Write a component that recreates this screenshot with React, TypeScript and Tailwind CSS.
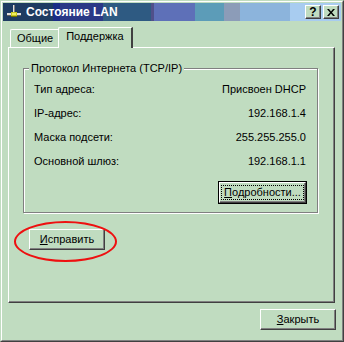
import React from "react";

const face = "bg-[#c0dcc0]";
const font = { fontFamily: '"Liberation Sans", Arial, sans-serif' };

const rows = [
  { label: "Тип адреса:", value: "Присвоен DHCP" },
  { label: "IP-адрес:", value: "192.168.1.4" },
  { label: "Маска подсети:", value: "255.255.255.0" },
  { label: "Основной шлюз:", value: "192.168.1.1" },
];

function LanIcon() {
  return (
    <svg width="16" height="16" viewBox="0 0 16 16" className="shrink-0">
      <rect x="7" y="1" width="2" height="8" fill="#e0e0e0" />
      <rect x="8" y="1" width="1" height="8" fill="#808080" />
      <rect x="1" y="9" width="14" height="2" fill="#e0e0e0" />
      <rect x="1" y="11" width="14" height="1" fill="#606060" />
      <rect x="5" y="8" width="6" height="5" fill="#c8c820" />
      <rect x="5" y="12" width="6" height="1" fill="#707000" />
      <rect x="6" y="9" width="4" height="2" fill="#f0f060" />
    </svg>
  );
}

function Btn({
  children,
  w,
  isDefault,
}: {
  children: React.ReactNode;
  w: string;
  isDefault?: boolean;
}) {
  const inner = (
    <div
      className={`${w} h-[21px] flex items-center justify-center border border-t-white border-l-white border-r-[#404040] border-b-[#404040] shadow-[inset_-1px_-1px_#808080] ${face}`}
    >
      {isDefault ? (
        <span className="border border-dotted border-black px-[2px] leading-[13px]">{children}</span>
      ) : (
        children
      )}
    </div>
  );
  if (isDefault) return <div className="border border-black">{inner}</div>;
  return inner;
}

export default function App() {
  return (
    <div
      className={`w-[344px] h-[342px] ${face} flex flex-col border border-t-[#c0dcc0] border-l-[#c0dcc0] border-r-[#404040] border-b-[#404040] text-[11px] text-black`}
      style={font}
    >
      <div className="flex-1 flex flex-col border border-t-white border-l-white border-r-[#808080] border-b-[#808080] p-px">
        {/* title bar */}
        <div className="h-[18px] flex items-center pl-[3px] pr-[2px] gap-[4px] bg-[linear-gradient(90deg,#1e3c62_0px,#1e3c62_50px,#1a2c86_50px,#1a2c86_57px,#2a3886_57px,#2a3886_100px,#2e5a82_100px,#2e5a82_148px,#50508a_148px,#50508a_151px,#5e70b8_151px,#5e70b8_192px,#5c9cb8_192px,#5c9cb8_221px,#8c9cb8_221px,#8c9cb8_237px,#8cb4dc_237px,#8cb4dc_287px,#a8ccf0_287px,#a8ccf0_100%)]">
          <LanIcon />
          <span className="text-white font-bold text-[12px]">Состояние LAN</span>
          <div className="ml-auto flex gap-[2px]">
            <div className={`w-[16px] h-[14px] flex items-center justify-center font-bold text-[12px] border border-t-white border-l-white border-r-[#404040] border-b-[#404040] shadow-[inset_-1px_-1px_#808080] ${face}`}>
              ?
            </div>
            <div className={`w-[16px] h-[14px] flex items-center justify-center border border-t-white border-l-white border-r-[#404040] border-b-[#404040] shadow-[inset_-1px_-1px_#808080] ${face}`}>
              <svg width="8" height="7" viewBox="0 0 8 7">
                <path d="M0 0h2l2 2.5L6 0h2L5 3.5 8 7H6L4 4.5 2 7H0l3-3.5z" fill="black" />
              </svg>
            </div>
          </div>
        </div>

        {/* body */}
        <div className="flex-1 flex flex-col pl-[5px] pr-[6px] pt-[6px]">
          {/* tabs */}
          <div className="flex items-end h-[21px] pl-[2px] relative z-10 -mb-[1px]">
            <div className="h-[18px] px-[6px] flex items-center border-t border-l border-t-white border-l-white border-r border-r-[#404040] rounded-tl-[2px] mb-px">
              Общие
            </div>
            <div className={`h-[21px] px-[7px] flex items-center -ml-[2px] border-t border-l border-t-white border-l-white border-r-2 border-r-[#404040] rounded-tl-[2px] ${face} pb-[3px]`}>
              Поддержка
            </div>
          </div>
          {/* panel */}
          <div className="h-[256px] flex flex-col border border-t-white border-l-white border-r-[#404040] border-b-[#404040] shadow-[inset_-1px_-1px_#808080] pl-[14px] pr-[16px] pt-[20px]">
            {/* group box */}
            <div className="relative h-[145px] border border-[#808080] shadow-[inset_1px_1px_white,1px_1px_white] pl-[10px] pr-[11px] pt-[8px]">
              <span className={`absolute -top-[8px] left-[5px] px-[2px] ${face} leading-[14px]`}>
                Протокол Интернета (TCP/IP)
              </span>
              <div className="flex flex-col">
                {rows.map((r) => (
                  <div key={r.label} className="h-[24px] flex items-center justify-between">
                    <span>{r.label}</span>
                    <span>{r.value}</span>
                  </div>
                ))}
              </div>
              <div className="flex justify-end mt-[8px] -mr-[1px]">
                <Btn w="w-[87px]" isDefault>
                  <span>
                    <u>П</u>одробности...
                  </span>
                </Btn>
              </div>
            </div>
            <div className="relative mt-[16px] ml-[6px] w-[76px]">
              <Btn w="w-[76px]">
                <span>
                  <u>И</u>справить
                </span>
              </Btn>
              <div className="absolute -left-[15px] -top-[8px] w-[103px] h-[41px] rounded-[50%] border-2 border-[#ee1010]" />
            </div>
          </div>
          {/* footer */}
          <div className="flex justify-end pt-[6px] -mr-px">
            <Btn w="w-[76px]">
              <span>
                <u>З</u>акрыть
              </span>
            </Btn>
          </div>
        </div>
      </div>
    </div>
  );
}
